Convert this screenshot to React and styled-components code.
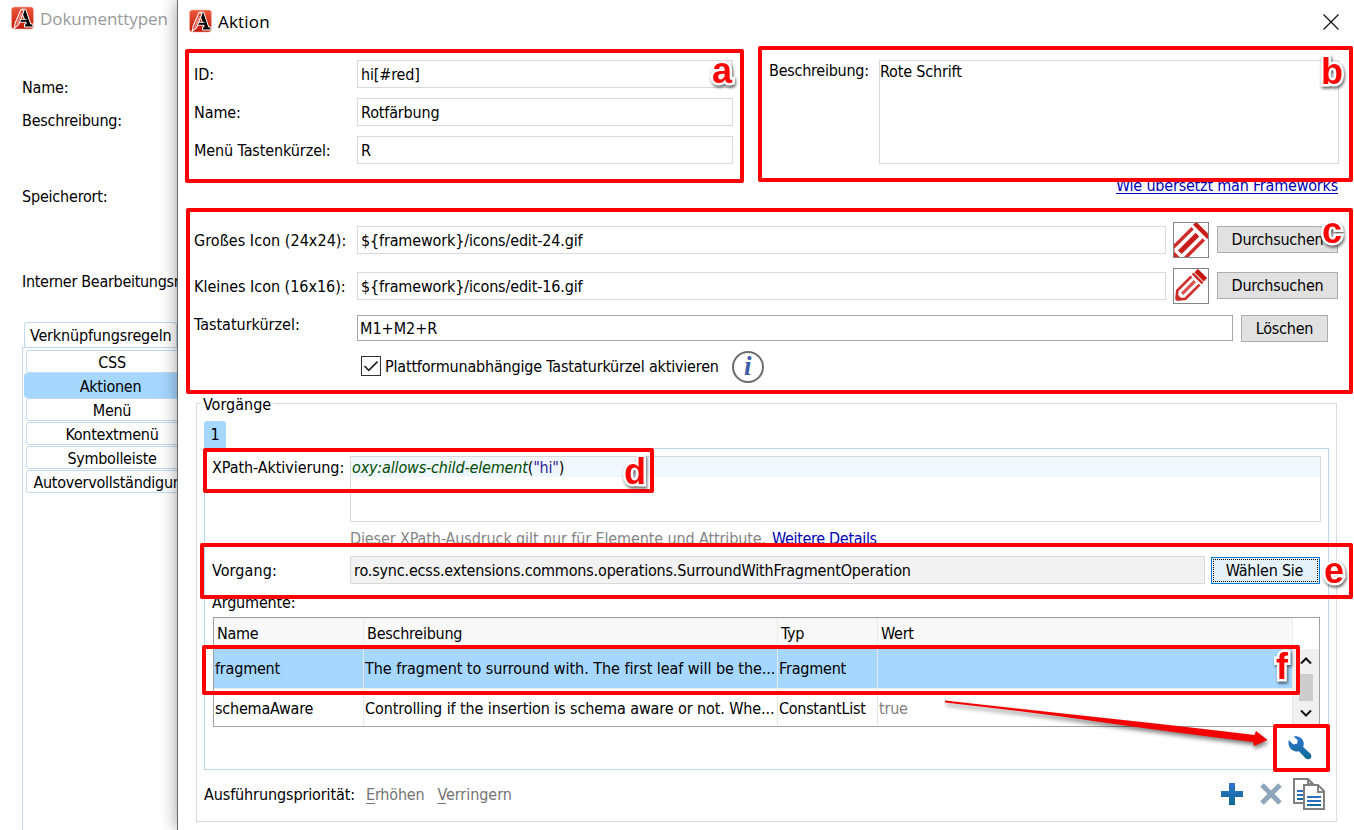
import React from 'react';
import styled, { createGlobalStyle, css } from 'styled-components';

const Global = createGlobalStyle`
  * { box-sizing: border-box; }
  body { margin: 0; background: #fff; }
`;

const Screen = styled.div`
  position: relative;
  display: flex;
  width: 1354px;
  height: 830px;
  overflow: hidden;
  background: #fff;
  color: #000;
  font: 16px/20px "DejaVu Sans Condensed", "DejaVu Sans", sans-serif;
  letter-spacing: -0.17px;
  white-space: nowrap;
`;

const T = styled.span`
  letter-spacing: ${p => p.$ls}px;
`;

/* ---------- window behind the dialog ---------- */
const BackWindow = styled.div`
  width: 177px;
  flex: none;
  overflow: hidden;
`;
const TitleBar = styled.div`
  display: flex;
  align-items: center;
  gap: ${p => p.$gap}px;
  height: ${p => p.$height}px;
  padding-left: ${p => p.$left}px;
  font: 17px/24px "Open Sans", "Noto Sans", sans-serif;
  letter-spacing: ${p => p.$ls}px;
  color: ${p => (p.$inactive ? '#999' : '#000')};
  svg { flex: none; margin-top: -2px; }
`;
const BackLabel = styled.div`
  padding-left: 22px;
  margin-top: ${p => p.$top}px;
  letter-spacing: ${p => p.$ls ?? -0.2}px;
`;
const BackTab = styled.div`
  width: 153px;
  height: 25px;
  margin: 30px 0 0 24px;
  padding: 3px 0 0 5px;
  border: 1px solid #c0d9f0;
  border-bottom: 0;
  border-radius: 3px 3px 0 0;
`;
const SideTabs = styled.div`
  height: 500px;
  width: 180px;
  margin-left: 22px;
  padding: 2px 0 0 3px;
  border: solid #c0d9f0;
  border-width: 1px 0 0 1px;
`;
const SideTab = styled.div`
  width: 172px;
  height: 23px;
  margin-bottom: 1px;
  border: 1px solid #c0d9f0;
  border-radius: 3px 0 0 3px;
  text-align: center;
  line-height: 23px;
  letter-spacing: -0.27px;
  ${p => p.$active && css`
    width: 173px;
    height: 25px;
    margin: -1px 0 0 -2px;
    border-color: #a6d7ff;
    background: #a6d7ff;
    line-height: 25px;
  `}
`;

/* ---------- dialog ---------- */
const Dialog = styled.div`
  position: relative;
  flex: 1;
  height: 830px;
  border-left: 1px solid #6a6a6a;
  background: #fff;
  box-shadow: 0 0 16px rgba(0, 0, 0, 0.38);
`;
const CloseIcon = styled.svg`
  && { margin: 0 15px 0 auto; }
`;
const TopForm = styled.div`
  display: flex;
  margin-top: 16px;
  padding-left: 16px;
`;
const Column = styled.div`
  display: flex;
  flex-direction: column;
  gap: 10px;
`;
const FieldRow = styled.div`
  display: flex;
  align-items: center;
`;
const Label = styled.div`
  flex: none;
  width: ${p => p.$w ?? 163}px;
  padding-top: 1px;
  letter-spacing: ${p => p.$ls ?? -0.1}px;
`;
const Input = styled.div`
  flex: none;
  width: ${p => p.$w}px;
  height: ${p => (p.$strong ? 26 : 28)}px;
  padding-left: ${p => (p.$strong ? 2 : 3)}px;
  padding-top: ${p => (p.$strong ? 0 : 1)}px;
  border: 1px solid ${p => (p.$strong ? '#a9a9ad' : '#d9d9d9')};
  background: ${p => (p.$readonly ? '#f2f2f2' : '#fff')};
  line-height: ${p => (p.$strong ? 25 : 26)}px;
  letter-spacing: ${p => p.$ls ?? -0.15}px;
`;
const Description = styled.div`
  display: flex;
  margin-left: 36px;
`;
const TextArea = styled.div`
  width: 460px;
  height: 104px;
  border: 1px solid #d9d9d9;
  line-height: 21px;
`;
const LinkRow = styled.div`
  display: flex;
  justify-content: flex-end;
  height: 58px;
  padding: 12px 16px 0 0;
`;
const Link = styled.a`
  height: 18px;
  color: #0000b4;
  letter-spacing: ${p => p.$ls ?? -0.2}px;
  border-bottom: ${p => (p.$underlined ? '1px solid #0000b4' : '0')};
`;
const IconRow = styled.div`
  display: flex;
  align-items: flex-start;
  height: 36px;
  margin: 0 0 10px 16px;
  & > ${Label} { margin-top: 8px; }
  & > ${Input} { margin-top: 4px; }
`;
const Preview = styled.div`
  width: 36px;
  height: 36px;
  margin: 0 8px 0 7px;
  border: 1px solid #858585;
  svg { display: block; }
`;
const Button = styled.div`
  width: ${p => p.$w}px;
  height: 27px;
  margin-top: ${p => p.$top ?? 0}px;
  border: 1px solid #adadad;
  background: #e1e1e1;
  text-align: center;
  line-height: 25px;
  letter-spacing: -0.23px;
  ${p => p.$focused && css`
    border-color: #0078d7;
    background: #e5f1fb;
    padding: 1px;
    line-height: 21px;
    & > span { display: block; height: 23px; border: 1px dotted #000; padding-right: 2px; }
  `}
`;
const ShortcutRow = styled.div`
  display: flex;
  height: 27px;
  margin: 11px 0 0 16px;
  & > ${Button} { margin-left: 8px; }
  & > ${Label} { margin-top: -1px; }
`;
const CheckRow = styled.div`
  display: flex;
  align-items: center;
  height: 32px;
  margin-top: 9px;
  padding-left: 183px;
`;
const CheckBox = styled.div`
  width: 20px;
  height: 20px;
  margin: -2px 4px 0 0;
  border: 1px solid #333;
  svg { display: block; }
`;
const InfoIcon = styled.div`
  width: 32px;
  height: 32px;
  margin-left: 13px;
  border: 2px solid #6b6b6b;
  border-radius: 50%;
  color: #3f5ea8;
  text-align: center;
  font: italic bold 27px/27px "Liberation Serif", serif;
  letter-spacing: 0;
`;
const Group = styled.div`
  width: 1141px;
  height: 419px;
  margin: 20px 0 0 18px;
  padding: 0 7px;
  border: 1px solid #dcdcdc;
`;
const Legend = styled.div`
  width: fit-content;
  margin: -9px 0 6px -3px;
  padding: 0 2px;
  background: #fff;
  letter-spacing: 0;
`;
const Tab = styled.div`
  width: 22px;
  height: 27px;
  border-radius: 3px 3px 0 0;
  background: #a6d7ff;
  text-align: center;
  line-height: 28px;
`;
const Panel = styled.div`
  width: 1125px;
  height: 322px;
  padding: 7px 0 0 7px;
  border: 1px solid #bcd8ef;
`;
const XPathRow = styled.div`
  display: flex;
  & > ${Label} { padding-top: 2px; }
`;
const CodeBox = styled.div`
  width: 971px;
  height: 66px;
  border: 1px solid #d9d9d9;
`;
const CodeLine = styled.div`
  height: 20px;
  padding-left: 1px;
  background: #eff7ff;
  line-height: 21px;
  i { color: #004b00; letter-spacing: -0.16px; }
  b { color: #2e1f96; font-weight: normal; }
`;
const Hint = styled.div`
  display: flex;
  gap: 6px;
  margin: 7px 0 7px 138px;
  color: #858585;
`;
const OperationRow = styled(FieldRow)`
  height: 28px;
  & > ${Button} { margin-left: 6px; }
`;
const Caption = styled.div`
  margin: 9px 0 4px;
`;
const Table = styled.div`
  display: flex;
  width: 1107px;
  height: 110px;
  margin-left: 1px;
  border: 1px solid #a0a0a0;
`;
const Cells = styled.div`
  display: grid;
  grid-template-columns: 150px 414px 100px 415px;
  grid-template-rows: 31px 40px 37px;
`;
const HeadCell = styled.div`
  padding-left: 3px;
  border-right: 1px solid #ebebeb;
  border-top: 1px solid #eee;
  background: #f9f9f9;
  line-height: 30px;
  letter-spacing: -0.25px;
`;
const Cell = styled.div`
  padding-left: 1px;
  border-right: 1px solid #e4e8eb;
  border-bottom: 1px solid ${p => (p.$selected ? '#eee' : '#fff')};
  background: ${p => (p.$selected ? '#a6d7ff' : '#fff')};
  color: ${p => (p.$muted ? '#808080' : '#000')};
  line-height: 39px;
  letter-spacing: ${p => p.$ls ?? -0.2}px;
`;
const ScrollBar = styled.div`
  display: flex;
  flex-direction: column;
  align-items: center;
  width: 26px;
  height: 77px;
  margin-top: 31px;
  background: #f0f0f0;
`;
const Thumb = styled.div`
  width: 14px;
  height: 27px;
  background: #cdcdcd;
`;
const ToolRow = styled.div`
  display: flex;
  justify-content: flex-end;
  padding: 9px 16px 0 0;
`;
const Footer = styled.div`
  display: flex;
  align-items: center;
  height: 48px;
  padding: 0 4px 0 0;
`;
const Priority = styled.span`
  padding-top: 1px;
  letter-spacing: -0.11px;
`;
const Action = styled.span`
  display: inline-block;
  margin-left: ${p => p.$left}px;
  padding-top: 1px;
  color: #747474;
  letter-spacing: ${p => p.$ls}px;
  &::first-letter {
    text-decoration: underline;
    text-underline-offset: 3px;
    text-decoration-thickness: 1px;
  }
`;
const FooterIcons = styled.div`
  display: flex;
  align-items: center;
  margin-left: auto;
`;
const Spacer = styled.div`
  width: ${p => p.$w}px;
`;

/* ---------- annotations lying over the window ---------- */
const Frame = styled.div`
  position: absolute;
  left: ${p => p.$x}px;
  top: ${p => p.$y}px;
  width: ${p => p.$w}px;
  height: ${p => p.$h}px;
  border: 4px solid #f00;
  border-radius: 2px;
`;
const Marker = styled.div`
  position: absolute;
  left: ${p => p.$x}px;
  top: ${p => p.$y}px;
  color: #f00;
  font: bold 36px/36px "Liberation Sans", sans-serif;
  letter-spacing: 0;
  -webkit-text-stroke: 5px #fff;
  paint-order: stroke fill;
  filter: drop-shadow(1px 2px 1.5px rgba(0, 0, 0, 0.6));
`;
const ArrowLayer = styled.svg`
  position: absolute;
  left: 935px;
  top: 690px;
  filter: drop-shadow(1px 3px 2px rgba(0, 0, 0, 0.5));
`;

const Logo = () => (
  <svg width="23" height="24" viewBox="0 0 23 24">
    <defs>
      <linearGradient id="lg" x1="0" y1="0" x2="0" y2="1">
        <stop offset="0" stopColor="#ee5a3c" />
        <stop offset="1" stopColor="#c21707" />
      </linearGradient>
    </defs>
    <rect x="0.5" y="1" width="22" height="22" rx="3" fill="url(#lg)" stroke="#f3b3a6" strokeWidth="0.6" />
    <path d="M10.5 3.2h4.2l5 14.8h2.2v3h-8.400v-3h1.7L11 7z" fill="#000" stroke="#fff" strokeWidth="1" />
    <path d="M8 14.8h7.500" stroke="#fff" strokeWidth="3.6" />
    <path d="M8 14.800h8" stroke="#000" strokeWidth="2" />
    <path d="M10 3.600l3 1L7.600 18.600l-4.4 3.800 1-5.400z" fill="#e03422" stroke="#fff" strokeWidth="1.1" />
    <path d="M10.600 7L5.800 18.500" stroke="#fff" strokeWidth="0.6" />
  </svg>
);

const Pencil = ({ large }) => (
  <svg width="34" height="34" viewBox="0 0 34 34">
    <g transform={large ? 'translate(-2 37) rotate(-45)' : 'translate(1 32) rotate(-45)'} fill="none" stroke="#cd2d29">
      {large ? (
        <>
          <path d="M1 0L9-8H37M1 0L9 8H37" strokeWidth="3.4" />
          <path d="M11 0H36" strokeWidth="5.2" stroke="#c91f1b" />
          <path d="M42-10V10" strokeWidth="4.4" stroke="#c91f1b" />
          <path d="M1 0l6-5v10z" fill="#cd2d29" strokeWidth="1" />
        </>
      ) : (
        <>
          <path d="M2 0L9-5.800H29M2 0L9 5.800H29" strokeWidth="2.6" />
          <path d="M10 0H28" strokeWidth="3.2" stroke="#d9524e" />
          <path d="M32-7V7" strokeWidth="2.6" />
          <path d="M36.500-6.500V6.500" strokeWidth="4.8" stroke="#c5150f" />
          <path d="M2 0l4-3.500v7z" fill="#cd2d29" strokeWidth="1" />
        </>
      )}
    </g>
  </svg>
);

const Chevron = ({ down }) => (
  <svg width="14" height="25" viewBox="0 0 14 25">
    <path d={down ? 'M2 9.5l5 5 5-5' : 'M2 14.5l5-5 5 5'} fill="none" stroke="#111" strokeWidth="2" />
  </svg>
);

const Wrench = () => (
  <svg width="24" height="24" viewBox="0 0 24 24">
    <defs>
      <linearGradient id="blue" x1="0" y1="0" x2="0" y2="1">
        <stop offset="0" stopColor="#2f76cc" />
        <stop offset="1" stopColor="#0f6a94" />
      </linearGradient>
    </defs>
    <path
      d="M5.6 0.6C10 -0.6 14.8 2 15.6 6.2C15.9 8 15.7 9.6 15.2 11L22.2 17.6C24 19.4 23.5 21.7 22 22.7C20.5 23.8 18.7 23.4 17.5 22.2L10.9 15.2C6.6 16.2 2.4 13.7 1 9.9C0.3 7.7 0.3 5.8 0.9 4L5.3 8.4L9 7.8L9.8 4.3Z"
      fill="url(#blue)"
    />
  </svg>
);

const Plus = () => (
  <svg width="22" height="22" viewBox="0 0 22 22">
    <path d="M8 0h6v8h8v6h-8v8H8v-8H0V8h8z" fill="url(#blue)" />
  </svg>
);

const Cross = () => (
  <svg width="22" height="22" viewBox="0 0 22 22">
    <path d="M2 2l18 18M20 2L2 20" stroke="#8ea6bb" strokeWidth="5" />
  </svg>
);

const Copy = () => (
  <svg width="32" height="32" viewBox="0 0 32 32">
    <path d="M1 1h14l5 5v19H1z" fill="#fff" stroke="#808080" strokeWidth="2" />
    <path d="M15 1v5h5" fill="none" stroke="#808080" strokeWidth="2" />
    <path d="M4 13h7M4 17h7" stroke="#2b70c0" strokeWidth="2" />
    <path d="M4 21h7" stroke="#146b9c" strokeWidth="2" />
    <path d="M11 7h14l6 6v18H11z" fill="#fff" stroke="#808080" strokeWidth="2" />
    <path d="M25 7v7h6" fill="none" stroke="#808080" strokeWidth="2" />
    <path d="M14 19h14M14 23h14" stroke="#2b70c0" strokeWidth="2" />
    <path d="M14 27h14" stroke="#146b9c" strokeWidth="2" />
  </svg>
);

const sideTabs = ['CSS', 'Aktionen', 'Menü', 'Kontextmenü', 'Symbolleiste', 'Autovervollständigung'];

export default function App() {
  return (
    <Screen>
      <Global />
      <BackWindow>
        <TitleBar $left={11} $gap={6} $height={38} $ls={-0.05} $inactive>
          <Logo />
          <span>Dokumenttypen</span>
        </TitleBar>
        <BackLabel $top={40}>Name:</BackLabel>
        <BackLabel $top={13} $ls={-0.25}>Beschreibung:</BackLabel>
        <BackLabel $top={56}>Speicherort:</BackLabel>
        <BackLabel $top={65} $ls={-0.3}>Interner Bearbeitungsmodus:</BackLabel>
        <BackTab>Verknüpfungsregeln</BackTab>
        <SideTabs>
          {sideTabs.map(name => (
            <SideTab key={name} $active={name === 'Aktionen'}>{name}</SideTab>
          ))}
        </SideTabs>
      </BackWindow>

      <Dialog>
        <TitleBar $left={11} $gap={6} $height={44} $ls={0.2}>
          <Logo />
          <span>Aktion</span>
          <CloseIcon width="16" height="16" viewBox="0 0 16 16">
            <path d="M0.5 0.5l15 15M15.5 0.5l-15 15" stroke="#111" strokeWidth="1.2" />
          </CloseIcon>
        </TitleBar>

        <TopForm>
          <Column>
            <FieldRow><Label>ID:</Label><Input $w={376}>hi[#red]</Input></FieldRow>
            <FieldRow><Label>Name:</Label><Input $w={376}>Rotfärbung</Input></FieldRow>
            <FieldRow><Label>Menü Tastenkürzel:</Label><Input $w={376}>R</Input></FieldRow>
          </Column>
          <Description>
            <Label $w={110} $ls={-0.25}>Beschreibung:</Label>
            <TextArea>Rote Schrift</TextArea>
          </Description>
        </TopForm>
        <LinkRow><Link $underlined>Wie übersetzt man Frameworks</Link></LinkRow>

        <IconRow>
          <Label $ls={0.05}>Großes Icon (24x24):</Label>
          <Input $w={809}>{'${framework}/icons/edit-24.gif'}</Input>
          <Preview><Pencil large /></Preview>
          <Button $w={121} $top={4}>Durchsuchen</Button>
        </IconRow>
        <IconRow>
          <Label $ls={-0.03}>Kleines Icon (16x16):</Label>
          <Input $w={809}>{'${framework}/icons/edit-16.gif'}</Input>
          <Preview><Pencil /></Preview>
          <Button $w={121} $top={4}>Durchsuchen</Button>
        </IconRow>
        <ShortcutRow>
          <Label $ls={0}>Tastaturkürzel:</Label>
          <Input $w={876} $strong $ls={0}>M1+M2+R</Input>
          <Button $w={87}>Löschen</Button>
        </ShortcutRow>
        <CheckRow>
          <CheckBox>
            <svg width="18" height="18" viewBox="0 0 18 18">
              <path d="M2.5 9l4.3 4.3L15.5 4.6" fill="none" stroke="#222" strokeWidth="1.7" />
            </svg>
          </CheckBox>
          <T $ls={-0.19}>Plattformunabhängige Tastaturkürzel aktivieren</T>
          <InfoIcon>i</InfoIcon>
        </CheckRow>

        <Group>
          <Legend>Vorgänge</Legend>
          <Tab>1</Tab>
          <Panel>
            <XPathRow>
              <Label $w={138} $ls={-0.08}>XPath-Aktivierung:</Label>
              <CodeBox>
                <CodeLine><i>oxy:allows-child-element</i>(<b>"hi"</b>)</CodeLine>
              </CodeBox>
            </XPathRow>
            <Hint>
              <T $ls={-0.11}>Dieser XPath-Ausdruck gilt nur für Elemente und Attribute.</T>
              <Link $ls={-0.32}>Weitere Details</Link>
            </Hint>
            <OperationRow>
              <Label $w={138} $ls={0.1}>Vorgang:</Label>
              <Input $w={855} $readonly $ls={-0.175}>
                ro.sync.ecss.extensions.commons.operations.SurroundWithFragmentOperation
              </Input>
              <Button $w={109} $focused $top={1}><span>Wählen Sie</span></Button>
            </OperationRow>
            <Caption>Argumente:</Caption>
            <Table>
              <Cells>
                <HeadCell>Name</HeadCell>
                <HeadCell>Beschreibung</HeadCell>
                <HeadCell>Typ</HeadCell>
                <HeadCell>Wert</HeadCell>
                <Cell $selected>fragment</Cell>
                <Cell $selected $ls={-0.05}>The fragment to surround with. The first leaf will be the...</Cell>
                <Cell $selected>Fragment</Cell>
                <Cell $selected />
                <Cell>schemaAware</Cell>
                <Cell $ls={-0.1}>Controlling if the insertion is schema aware or not. Whe...</Cell>
                <Cell $ls={-0.28}>ConstantList</Cell>
                <Cell $muted>true</Cell>
              </Cells>
              <ScrollBar>
                <Chevron />
                <Thumb />
                <Chevron down />
              </ScrollBar>
            </Table>
            <ToolRow><Wrench /></ToolRow>
          </Panel>
          <Footer>
            <Priority>Ausführungspriorität:</Priority>
            <Action $left={11} $ls={-0.2}>Erhöhen</Action>
            <Action $left={13} $ls={-0.05}>Verringern</Action>
            <FooterIcons>
              <Plus />
              <Spacer $w={17} />
              <Cross />
              <Spacer $w={11} />
              <Copy />
            </FooterIcons>
          </Footer>
        </Group>
      </Dialog>

      <ArrowLayer width="345" height="70" viewBox="935 690 345 70">
        <path d="M945 700.5Q1020 709 1100 717.5T1254.500 735L1256 731L1267.500 740L1254 746L1253 742Q1170 732 1100 722T945 702.500Z" fill="#f50000" />
      </ArrowLayer>
      <Frame $x={185} $y={49} $w={559} $h={134} />
      <Frame $x={758} $y={46} $w={595} $h={136} />
      <Frame $x={186} $y={208} $w={1167} $h={186} />
      <Frame $x={203} $y={448} $w={451} $h={45} />
      <Frame $x={200} $y={543} $w={1153} $h={56} />
      <Frame $x={202} $y={645} $w={1098} $h={50} />
      <Frame $x={1273} $y={724} $w={57} $h={48} />
      <Marker $x={712} $y={53}>a</Marker>
      <Marker $x={1321} $y={54}>b</Marker>
      <Marker $x={1322} $y={213}>c</Marker>
      <Marker $x={624} $y={454}>d</Marker>
      <Marker $x={1324} $y={553}>e</Marker>
      <Marker $x={1276} $y={649}>f</Marker>
    </Screen>
  );
}
